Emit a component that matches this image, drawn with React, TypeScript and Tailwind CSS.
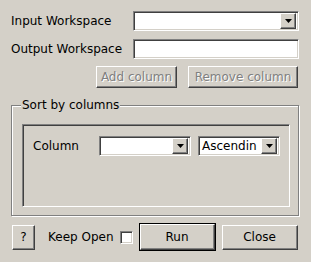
import React from "react";

const sunken =
  "border border-t-[#808080] border-l-[#808080] border-b-white border-r-white shadow-[inset_1px_1px_0_#404040,inset_-1px_-1px_0_#d4d0c8]";
const raised =
  "border border-t-white border-l-white border-b-[#404040] border-r-[#404040] shadow-[inset_-1px_-1px_0_#808080]";

function Arrow() {
  return (
    <div className={`w-[16px] h-[16px] bg-[#d4d0c8] flex items-center justify-center shrink-0 ${raised}`}>
      <svg width="7" height="4" viewBox="0 0 7 4">
        <path d="M0 0H7L3.5 4Z" fill="#000" />
      </svg>
    </div>
  );
}

function Combo({ w, text }: { w: string; text?: string }) {
  return (
    <div className={`${w} h-[20px] bg-white flex items-center p-[2px] ${sunken}`}>
      <div className="flex-1 overflow-hidden whitespace-nowrap pl-[1px] leading-[16px]">{text}</div>
      <Arrow />
    </div>
  );
}

export default function App() {
  return (
    <div
      className="w-[311px] h-[262px] bg-[#d4d0c8] text-black text-[12px] flex flex-col pt-[11px] pl-[11px] pr-[12px]"
      style={{ fontFamily: '"DejaVu Sans", sans-serif' }}
    >
      <div className="h-[20px] flex items-center justify-between">
        <span>Input Workspace</span>
        <Combo w="w-[166px]" />
      </div>
      <div className="mt-[8px] h-[20px] flex items-center justify-between">
        <span>Output Workspace</span>
        <div className={`w-[166px] h-[20px] bg-white ${sunken}`} />
      </div>
      <div className="mt-[7px] h-[22px] flex justify-end gap-[11px] mr-[1px]">
        <div className={`w-[81px] h-[22px] flex items-center justify-center text-[#808080] [text-shadow:1px_1px_0_#fff] ${raised}`}>
          Add column
        </div>
        <div className={`w-[110px] h-[22px] flex items-center justify-center text-[#808080] [text-shadow:1px_1px_0_#fff] ${raised}`}>
          Remove column
        </div>
      </div>
      <div className="relative mt-[17px] w-[288px] h-[111px] border border-[#808080] shadow-[inset_1px_1px_0_#fff,1px_1px_0_#fff] pl-[10px] pt-[18px]">
        <span className="absolute left-[9px] top-[-9px] px-[1px] bg-[#d4d0c8] leading-[16px]">Sort by columns</span>
        <div className={`w-[268px] h-[83px] pl-[10px] pt-[11px] ${sunken}`}>
          <div className="flex items-center h-[20px]">
            <span className="w-[66px]">Column</span>
            <Combo w="w-[92px]" />
            <div className="w-[7px]" />
            <Combo w="w-[82px]" text="Ascendin" />
          </div>
        </div>
      </div>
      <div className="mt-[7px] h-[28px] flex items-center">
        <div className={`ml-[1px] w-[23px] h-[25px] flex items-center justify-center ${raised}`}>?</div>
        <span className="ml-[13px]">Keep Open</span>
        <div className={`ml-[6px] w-[13px] h-[13px] bg-white ${sunken}`} />
        <div className="ml-[6px] w-[77px] h-[28px] border border-black">
          <div className={`w-full h-full flex items-center justify-center ${raised}`}>Run</div>
        </div>
        <div className={`ml-[6px] w-[76px] h-[25px] flex items-center justify-center ${raised}`}>Close</div>
      </div>
    </div>
  );
}
